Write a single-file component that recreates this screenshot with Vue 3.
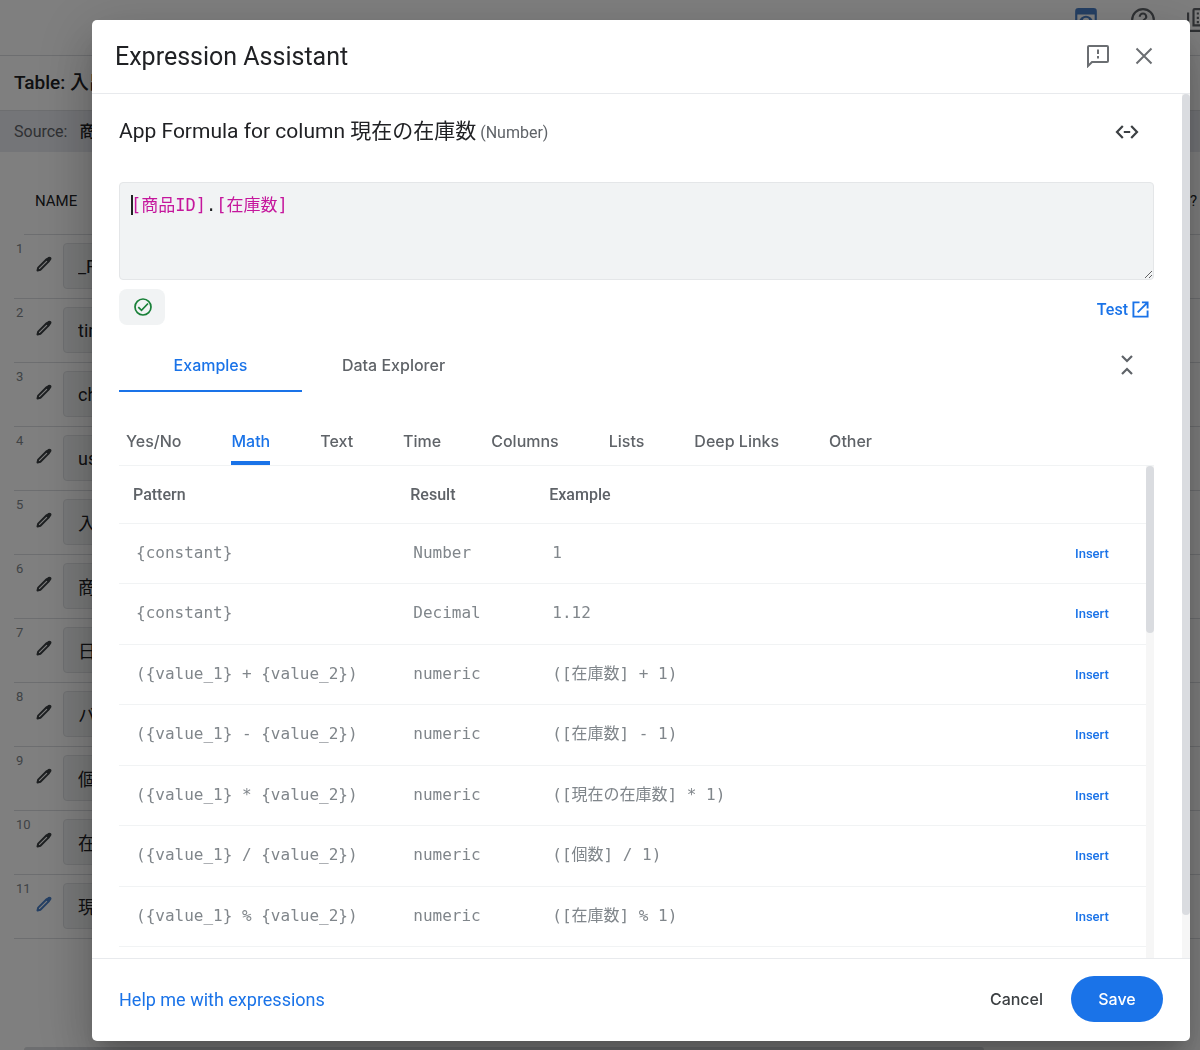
<template>
  <div class="page">
    <header class="topbar">
      <svg class="top-icon blue" viewBox="0 0 24 24"><path d="M19 1H5a3 3 0 0 0-3 3v16a3 3 0 0 0 3 3h14a3 3 0 0 0 3-3V4a3 3 0 0 0-3-3zm1 19H4V7h16zM12 8c-3 0-5.500 2-6.500 5 1 3 3.500 5 6.500 5s5.500-2 6.500-5c-1-3-3.500-5-6.500-5zm0 8a3 3 0 1 1 0-6 3 3 0 0 1 0 6z" /></svg>
      <svg class="top-icon" viewBox="0 0 24 24"><path d="M11 18h2v-2h-2zM12 1a11 11 0 1 0 0 22 11 11 0 0 0 0-22zm0 20a9 9 0 1 1 0-18 9 9 0 0 1 0 18zM12 5a4 4 0 0 0-4 4h2a2 2 0 1 1 4 0c0 2-3 1.800-3 5h2c0-2.200 3-2.500 3-5a4 4 0 0 0-4-4z" /></svg>
      <svg class="top-icon" viewBox="0 0 24 24"><path d="M7 1h15v17H5V3a2 2 0 0 1 2-2zm0 2v13h15V3zM0 5h2v16h20v2H0z" /><path d="M9 5h2v2H9zm4 0h2v2h-2zm4 0h2v2h-2zM9 9h2v2H9zm4 0h2v2h-2zm4 0h2v2h-2zM9 13h2v2H9zm4 0h2v2h-2z" /></svg>
    </header>
    <div class="table-name">Table: 入出庫</div>
    <div class="source">Source: <b>商品</b></div>
    <div class="columns-head">
      <span>NAME</span>
      <span>KEY?</span>
    </div>
    <ol class="columns">
      <li v-for="(name, i) in columns" :key="name" class="column-row">
        <span class="index">{{ i + 1 }}</span>
        <button class="pencil" :class="{ edited: i === 10 }" :aria-label="'Edit ' + name">
          <svg viewBox="0 0 16 16"><path d="M1.500 14.500 2.200 11.600 10.600 3.200 12.800 5.400 4.400 13.800z" fill="none" stroke="currentColor" stroke-width="2" stroke-linejoin="round" /><path d="M9.500 3.400 12.200 1Q13.600 0.200 15 1.300 16 2.600 15 4L12.600 6.500z" fill="currentColor" /></svg>
        </button>
        <input class="field" :value="name" :aria-label="'Column ' + (i + 1)" />
      </li>
    </ol>
    <div class="page-scroll"></div>

    <div class="overlay">
      <section class="dialog" role="dialog" aria-labelledby="dialog-title">
        <header class="dialog-head">
          <h1 id="dialog-title">Expression Assistant</h1>
          <button class="icon-btn" aria-label="Send feedback">
            <svg viewBox="0 0 24 24"><path d="M2 22V3q0-1 1-1h18q1 0 1 1v14q0 1-1 1H6z" fill="none" stroke="currentColor" stroke-width="2" /><path d="M11 5.500h2v4.500h-2zM11 12h2v2.500h-2z" fill="currentColor" /></svg>
          </button>
          <button class="icon-btn" aria-label="Close">
            <svg viewBox="0 0 24 24"><path d="M4.500 4.500 19.500 19.500M19.500 4.500 4.500 19.500" stroke="currentColor" stroke-width="2" /></svg>
          </button>
        </header>

        <div class="dialog-body">
          <div class="content">
            <div class="formula-head">
              <h2>App Formula for column 現在の在庫数<small>(Number)</small></h2>
              <button class="icon-btn dark" aria-label="Toggle editor">
                <svg viewBox="0 0 24 24"><path d="M7.800 6 2 12 7.800 18M16.200 6 22 12 16.200 18M8.800 12h6.400" fill="none" stroke="currentColor" stroke-width="2.200" /></svg>
              </button>
            </div>

            <div class="editor">
              <textarea v-model="formula" aria-label="Formula" spellcheck="false"></textarea>
              <div class="highlight" aria-hidden="true"><span v-for="(t, i) in tokens" :key="i" :class="{ ref: t[0] === '[' }">{{ t }}</span></div>
            </div>

            <div class="status">
              <button class="valid" aria-label="Expression is valid">
                <svg viewBox="0 0 18 18"><circle cx="9" cy="9" r="8" /><path d="M4.300 9.200 7.500 12.300 14 5.500" /></svg>
              </button>
              <a href="#" class="test">Test
                <svg viewBox="0 0 18 18"><path d="M8 1.500H1.500v15h15V10M10.500 1.500h6V8M16 2 6 12" /></svg>
              </a>
            </div>

            <nav class="tabs">
              <button v-for="tab in mainTabs" :key="tab" :class="{ active: tab === mainTab }" @click="mainTab = tab">{{ tab }}</button>
              <button class="collapse" aria-label="Collapse">
                <svg viewBox="0 0 24 24"><path d="M7 3 12 8 17 3M7 21 12 16 17 21" fill="none" stroke="currentColor" stroke-width="2.200" /></svg>
              </button>
            </nav>

            <nav class="types">
              <button v-for="type in types" :key="type" :class="{ active: type === currentType }" @click="currentType = type">{{ type }}</button>
            </nav>

            <div class="examples">
              <div class="examples-view">
                <table>
                  <colgroup>
                    <col class="col-pattern" />
                    <col class="col-result" />
                    <col />
                    <col class="col-insert" />
                  </colgroup>
                  <thead>
                    <tr>
                      <th>Pattern</th>
                      <th>Result</th>
                      <th>Example</th>
                      <th></th>
                    </tr>
                  </thead>
                  <tbody>
                    <tr v-for="(row, i) in rows" :key="i">
                      <td>{{ row.pattern }}</td>
                      <td>{{ row.result }}</td>
                      <td>{{ row.example }}</td>
                      <td><button class="insert" @click="formula = row.example">Insert</button></td>
                    </tr>
                  </tbody>
                </table>
              </div>
              <div class="rail"><div class="thumb" :style="{ height: '34%' }"></div></div>
            </div>
          </div>
          <div class="rail"><div class="thumb" :style="{ height: '95%' }"></div></div>
        </div>

        <footer class="dialog-foot">
          <a href="#">Help me with expressions</a>
          <button class="cancel">Cancel</button>
          <button class="save">Save</button>
        </footer>
      </section>
    </div>
  </div>
</template>

<script setup>
import { ref, computed } from 'vue';

const columns = ['_RowNumber', 'timestamp', 'check', 'user', '入出庫', '商品ID', '日時', 'バーコード', '個数', '在庫数', '現在の在庫数'];
const mainTabs = ['Examples', 'Data Explorer'];
const types = ['Yes/No', 'Math', 'Text', 'Time', 'Columns', 'Lists', 'Deep Links', 'Other'];
const rows = [
  { pattern: '{constant}', result: 'Number', example: '1' },
  { pattern: '{constant}', result: 'Decimal', example: '1.12' },
  { pattern: '({value_1} + {value_2})', result: 'numeric', example: '([在庫数] + 1)' },
  { pattern: '({value_1} - {value_2})', result: 'numeric', example: '([在庫数] - 1)' },
  { pattern: '({value_1} * {value_2})', result: 'numeric', example: '([現在の在庫数] * 1)' },
  { pattern: '({value_1} / {value_2})', result: 'numeric', example: '([個数] / 1)' },
  { pattern: '({value_1} % {value_2})', result: 'numeric', example: '([在庫数] % 1)' }
];

const mainTab = ref('Examples');
const currentType = ref('Math');
const formula = ref('[商品ID].[在庫数]');

// column references are coloured, everything else stays black
const tokens = computed(() => formula.value.split(/(\[[^\]]*\])/).filter(Boolean));
</script>

<style>
body {
  margin: 0;
}
</style>

<style scoped>
* {
  box-sizing: border-box;
}
.page {
  display: flex;
  flex-direction: column;
  height: 100vh;
  overflow: hidden;
  background: #fff;
  color: #202124;
  font-family: Roboto, "Noto Sans CJK JP", sans-serif;
}
button {
  padding: 0;
  border: 0;
  background: none;
  color: inherit;
  font: inherit;
  cursor: pointer;
}
a {
  color: #1a73e8;
  text-decoration: none;
}
svg {
  display: block;
}

/* page behind the dialog */
.topbar {
  display: flex;
  flex: none;
  justify-content: flex-end;
  gap: 31px;
  height: 56px;
  margin-right: -13px;
  padding-top: 7px;
  border-bottom: 1px solid #dadce0;
}
.top-icon {
  width: 26px;
  height: 26px;
  fill: #5f6368;
}
.top-icon.blue {
  fill: #4a80c8;
}
.table-name {
  flex: none;
  padding-left: 14px;
  border-bottom: 1px solid #dadce0;
  font-size: 19px;
  font-weight: 500;
  line-height: 54px;
}
.source {
  flex: none;
  padding-left: 14px;
  background: #e8eaf0;
  color: #5f6368;
  font-size: 16px;
  line-height: 41px;
}
.source b {
  margin-left: 8px;
  color: #202124;
  font-weight: 500;
}
.columns-head {
  display: flex;
  flex: none;
  justify-content: space-between;
  margin-left: 24px;
  padding: 16px 3px 0 11px;
  border-bottom: 1px solid #dadce0;
  font-size: 15px;
  line-height: 66px;
}
.columns {
  margin: 0 0 0 14px;
  padding: 0;
  list-style: none;
}
.column-row {
  display: flex;
  height: 64px;
  border-bottom: 1px solid #dadce0;
}
.index {
  width: 22px;
  padding: 6px 0 0 2px;
  color: #80868b;
  font-size: 13px;
}
.pencil {
  width: 16px;
  color: #3c4043;
}
.pencil.edited {
  color: #4a80c8;
}
.pencil svg {
  width: 16px;
  height: 16px;
  margin-bottom: 5px;
}
.field {
  flex: 1;
  height: 46px;
  margin: 8px 12px 0 11px;
  padding: 0 14px;
  border: 1px solid #e0e2e5;
  border-radius: 4px;
  background: #f1f3f4;
  color: #202124;
  font: 18px Roboto, "Noto Sans CJK JP", sans-serif;
}
.page-scroll {
  flex: none;
  width: 80%;
  height: 6px;
  margin: auto 0 -3px 24px;
  border-radius: 4px;
  background: #dadce0;
}

/* dialog */
.overlay {
  position: fixed;
  inset: 0;
  display: flex;
  padding: 20px 10px 9px 92px;
  background: rgba(0, 0, 0, 0.5);
}
.dialog {
  display: flex;
  flex: 1;
  flex-direction: column;
  min-width: 0;
  border-radius: 5px;
  background: #fff;
  box-shadow: 0 14px 20px -8px rgba(0, 0, 0, 0.2), 0 30px 50px 4px rgba(0, 0, 0, 0.14), 0 12px 60px 10px rgba(0, 0, 0, 0.12);
}
.dialog-head {
  display: flex;
  flex: none;
  align-items: center;
  gap: 22px;
  height: 74px;
  padding: 0 34px 1px 23px;
  border-bottom: 1px solid #e8eaed;
}
h1 {
  flex: 1;
  margin: 0;
  font-size: 25px;
  font-weight: 400;
}
.icon-btn {
  color: #6b6e72;
}
.icon-btn svg {
  width: 24px;
  height: 24px;
}
.icon-btn.dark {
  color: #3c4043;
}
.dialog-body {
  display: flex;
  flex: 1;
  min-height: 0;
}
.content {
  display: flex;
  flex: 1;
  flex-direction: column;
  min-width: 0;
  padding: 0 28px 0 27px;
}
.rail {
  flex: none;
  width: 8px;
  background: #f6f6f6;
}
.thumb {
  border-radius: 4px;
  background: #dadce0;
}
.formula-head {
  display: flex;
  flex: none;
  align-items: center;
  justify-content: space-between;
  height: 88px;
  padding: 0 15px 13px 0;
}
h2 {
  margin: 0;
  font-size: 21px;
  font-weight: 400;
  line-height: 24px;
}
small {
  margin-left: 4px;
  color: #5f6368;
  font-size: 16px;
}
.editor {
  position: relative;
  flex: none;
}
textarea,
.highlight {
  padding: 10px 11px;
  border: 1px solid #e4e6e8;
  font: 17px/24px "DejaVu Sans Mono", "Noto Sans CJK JP", monospace;
}
textarea {
  display: block;
  width: 100%;
  height: 98px;
  border-radius: 4px;
  outline: 0;
  background: #f1f3f4;
  color: transparent;
  caret-color: #202124;
  resize: vertical;
}
.highlight {
  position: absolute;
  inset: 0;
  border-color: transparent;
  pointer-events: none;
}
.highlight::before {
  content: "";
  position: absolute;
  top: 12px;
  width: 2px;
  height: 20px;
  background: #202124;
}
.ref {
  color: #c5169c;
}
.status {
  display: flex;
  flex: none;
  align-items: center;
  justify-content: space-between;
  padding: 9px 5px 0 0;
}
.valid {
  display: grid;
  place-items: center;
  width: 46px;
  height: 36px;
  padding-left: 2px;
  border-radius: 8px;
  background: #f1f3f4;
}
.valid svg {
  width: 18px;
  height: 18px;
  fill: none;
  stroke: #188038;
  stroke-width: 1.7;
}
.test {
  display: flex;
  align-items: center;
  gap: 4px;
  padding-top: 4px;
  font-size: 16px;
  font-weight: 500;
}
.test svg {
  width: 17px;
  height: 17px;
  fill: none;
  stroke: currentColor;
  stroke-width: 2;
}
.tabs,
.types {
  display: flex;
  flex: none;
  color: #5f6368;
  font-family: Inter, sans-serif;
  font-size: 16px;
  font-weight: 500;
}
.tabs {
  height: 67px;
  padding-top: 14px;
}
.tabs button {
  width: 183px;
  border-bottom: 2px solid transparent;
}
.tabs .active {
  border-bottom-color: #1a73e8;
  color: #1a73e8;
}
.tabs .collapse {
  width: 24px;
  margin: 0 15px 0 auto;
}
.types {
  gap: 50px;
  height: 74px;
  padding: 28px 7px 0;
  border-bottom: 1px solid #f1f3f4;
}
.types button {
  border-bottom: 4px solid transparent;
}
.types .active {
  color: #1a73e8;
  border-image: linear-gradient(#1a73e8, #1a73e8) 1;
}
.examples {
  display: flex;
  flex: 1;
  min-height: 0;
}
.examples-view {
  flex: 1;
  overflow: hidden;
}
table {
  width: 100%;
  border-collapse: separate;
  border-spacing: 0;
  table-layout: fixed;
}
.col-pattern {
  width: 27%;
}
.col-result {
  width: 139px;
}
.col-insert {
  width: 88px;
}
th,
td {
  padding: 0 0 0 14px;
  border-bottom: 1px solid #f1f3f4;
  text-align: left;
  white-space: nowrap;
}
th {
  height: 58px;
  color: #5f6368;
  font-size: 16px;
  font-weight: 500;
}
td {
  height: 60px;
  padding: 0 0 2px 17px;
  color: #80868b;
  font: 16px/24px "DejaVu Sans Mono", "Noto Sans CJK JP", monospace;
}
tr:nth-child(even) td {
  height: 61px;
}
.insert {
  color: #1a73e8;
  font: 500 13px Roboto, sans-serif;
}
.dialog-foot {
  display: flex;
  flex: none;
  align-items: center;
  height: 83px;
  padding: 0 27px 2px;
  border-top: 1px solid #e8eaed;
  font-family: Inter, sans-serif;
  font-size: 16px;
  font-weight: 500;
}
.dialog-foot a {
  flex: 1;
  font-family: Roboto, sans-serif;
  font-size: 18px;
  font-weight: 400;
}
.cancel {
  color: #3c4043;
}
.save {
  width: 92px;
  height: 46px;
  margin-left: 28px;
  border-radius: 23px;
  background: #1a73e8;
  color: #fff;
}
</style>
